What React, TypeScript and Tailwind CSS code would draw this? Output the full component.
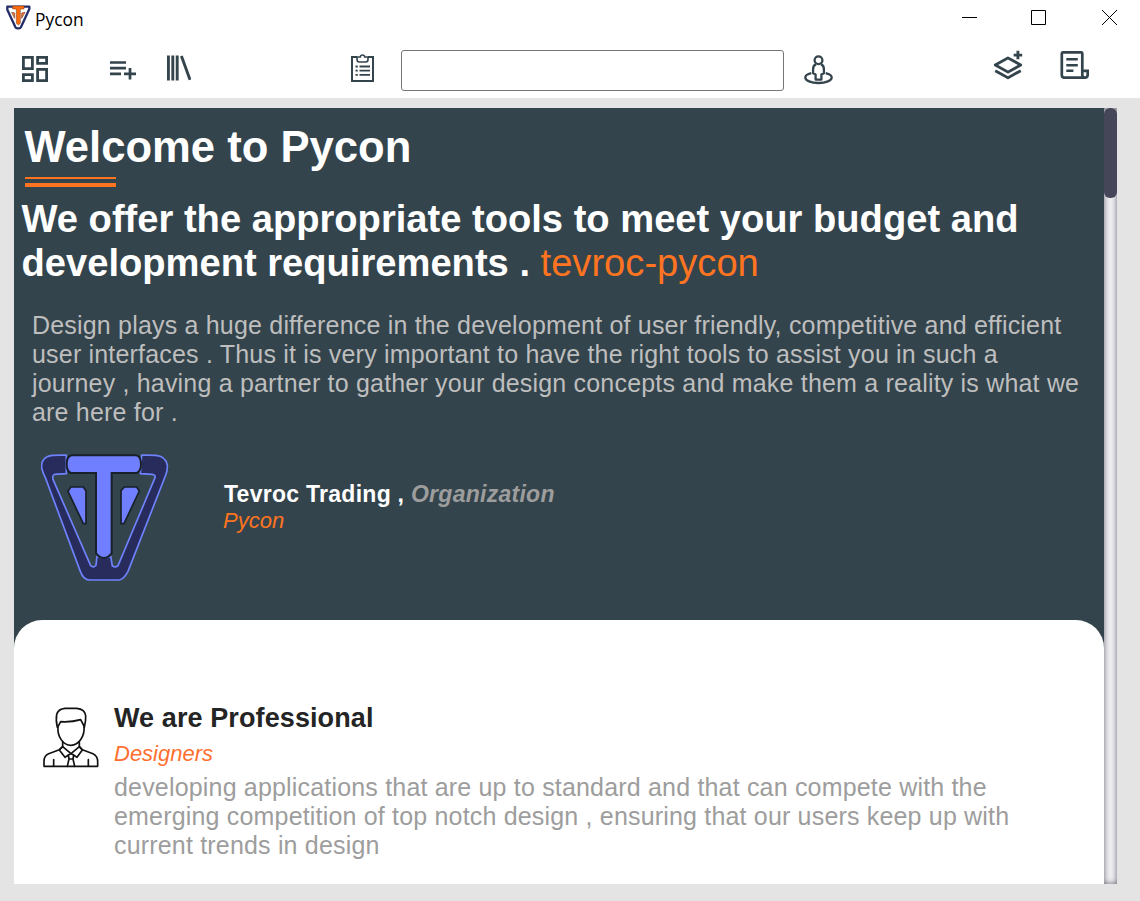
import { BiLayerPlus } from "react-icons/bi";

function SmallLogo() {
  return (
    <svg className="h-[25px] w-[25px]" viewBox="17 14 75 75">
      <path d="M21 19H87V26L62 80Q60 84 56 84H51Q47 84 45 80L21 28Z" fill="#fff" stroke="#262e69" strokeWidth="7" strokeLinejoin="round" />
      <path d="M34 36L43 38V54ZM74 36L64 38V54Z" fill="#f9813a" stroke="#7b3315" strokeWidth="2" />
      <path d="M37 17H71V26H60V69L54 74L48 69V26H37Z" fill="#ff6d0a" stroke="#7b3315" strokeWidth="1.5" />
    </svg>
  );
}

function BigLogo() {
  return (
    <svg className="h-32 w-32" viewBox="63 42 384 384">
      <path
        d="M139 45L98 46C72 48 61 66 66 88Q70 102 76 113L181 394Q190 419 208 420H298Q312 417 324 394L436 108Q443 92 442 76C438 54 425 47 407 46L365 45L361 101L396 103Q407 104 405 113L294 377Q287 384 277 378L272 348Q254 360 231 348L228 376Q221 385 212 377L99 118Q96 106 104 103L139 101Z"
        fill="#272c5c"
        stroke="#6f83ff"
        strokeWidth="5"
        strokeLinejoin="round"
      />
      <path
        d="M154 46H350Q363 50 363 73Q363 94 350 99H275V340Q264 354 252 354Q239 354 228 340V99H153Q140 95 140 73Q140 50 154 46Z"
        fill="#6f7fff"
        stroke="#182029"
        strokeWidth="6"
      />
      <path d="M152 141H190L198 153V251H190L144 154ZM350 141H313L303 152V251H312L358 153Z" fill="#6f7fff" stroke="#182029" strokeWidth="5" strokeLinejoin="round" />
    </svg>
  );
}

function PersonIcon() {
  return (
    <svg className="h-[62px] w-[57px] shrink-0" viewBox="39 34 171 186" fill="none" stroke="#111" strokeWidth="5" strokeLinejoin="round" strokeLinecap="round">
      <path d="M82 95Q77 73 80 57Q84 40 105 38H140Q165 40 167 60Q168 76 163 95" />
      <path d="M84 93L92 78Q124 80 152 72L162 91C165 122 146 149 123 149C99 149 81 122 84 93Z" />
      <path d="M98 138V153L88 162L56 174Q42 180 42 197V212H203V197Q203 181 189 174L157 162L148 153V138" />
      <path d="M98 153L123 174L148 153L157 163L141 185L131 178M98 153L88 163L105 185L115 178M115 178L123 174L131 178L129 190H117ZM117 190L112 212M129 190L134 212M71 192V211M175 192V211" />
    </svg>
  );
}

function DashboardIcon() {
  return (
    <svg className="mt-5 ml-[22px] h-[26px] w-[26px]" viewBox="0 0 26 26" fill="none" stroke="#34444c" strokeWidth="2.8">
      <path d="M1.4 1.4H10.4V12.6H1.4ZM15.6 1.4H24.6V7.3H15.6ZM1.4 18.7H10.4V24.6H1.4ZM15.6 13.4H24.6V24.6H15.6Z" />
    </svg>
  );
}

function ListPlusIcon() {
  return (
    <svg className="mt-[25px] ml-[62px] h-[19px] w-[26px]" viewBox="0 0 26 19" stroke="#34444c" strokeWidth="2.7">
      <path d="M0 1.5H16M0 7.2H16M0 12.8H11M14 12.8H26M20 7V18.5" />
    </svg>
  );
}

function LibraryIcon() {
  return (
    <svg className="mt-[19px] ml-[31px] h-[26px] w-6" viewBox="0 0 24 26" stroke="#34444c" strokeWidth="2.9">
      <path d="M1.4 .5V25.5M5.8 .5V25.5M10.2 .5V25.5M14.4 1L23 24.8" />
    </svg>
  );
}

function ClipboardIcon() {
  return (
    <svg className="mt-[18px] ml-[160px] h-7 w-[23px]" viewBox="0 0 23 28" fill="none" stroke="#34444c" strokeWidth="2">
      <path d="M6 3H1V27H22V3H17" />
      <path d="M6 3H9.3Q9.5 1 11.5 1Q13.5 1 13.7 3H17V5.5Q17 8 14.8 8H8.2Q6 8 6 5.5Z" strokeWidth="1.6" />
      <path d="M4.5 12.5H6.8M8.5 12.5H19M4.5 16.7H6.8M8.5 16.7H19M4.5 20.9H6.8M8.5 20.9H19" strokeWidth="1.8" />
    </svg>
  );
}

function StreetViewIcon() {
  return (
    <svg className="mt-[19px] ml-5 h-[30px] w-[29px]" viewBox="0 0 29 30" fill="none" stroke="#34444c" strokeWidth="2.3" strokeLinejoin="round">
      <circle cx="14.5" cy="5.3" r="3.9" />
      <path d="M12 9.4Q9.1 10.5 9.1 14V18.2L11.6 19.6V24.6H17.4V19.6L19.9 18.2V14Q19.9 10.5 17 9.4" />
      <path d="M7.3 18.1C3.3 19 1.3 20.6 1.3 22.4C1.3 25.6 7 28 14.5 28S27.7 25.6 27.7 22.4C27.7 20.6 25.7 19 21.7 18.1" />
    </svg>
  );
}

function ReceiptIcon() {
  return (
    <svg className="mt-[15px] ml-[35px] h-7 w-[29px]" viewBox="0 0 29 28" fill="none" stroke="#34444c" strokeWidth="2.7">
      <path d="M22.3 20V2.6Q22.3 1.3 21 1.3H3.3Q1.8 1.3 1.8 2.8V24Q1.8 26.7 4.5 26.7H25Q27.7 26.7 27.7 24V19.9H22.3V24Q22.3 26.7 25 26.7" />
      <path d="M6.3 8.3H17.8M6.3 14.2H17.8M6.3 19.8H13.4" strokeWidth="2.5" />
    </svg>
  );
}

function TitleBar() {
  return (
    <div className="flex h-9 items-start">
      <div className="mt-[4.5px] ml-[5.5px]"><SmallLogo /></div>
      <span className="mt-[7px] ml-[4.5px] font-['Open_Sans',sans-serif] text-[17.4px] leading-6 text-black">Pycon</span>
      <svg className="mt-[10px] mr-[23px] ml-auto h-4 w-[155px]" viewBox="0 0 155 16" fill="none" stroke="#000">
        <path d="M0 7.5H15M69.5 .5H83.5V14.5H69.5Z" />
        <path d="M140 0L155 15M155 0L140 15" />
      </svg>
    </div>
  );
}

function Toolbar() {
  return (
    <div className="flex h-[62px] items-start text-[#34444c]">
      <DashboardIcon />
      <ListPlusIcon />
      <LibraryIcon />
      <ClipboardIcon />
      <input className="mt-[14px] ml-[27px] h-[41px] w-[383px] rounded-[3px] border border-[#767676] bg-white px-2 outline-none" />
      <StreetViewIcon />
      <BiLayerPlus className="mt-3 ml-[158px] h-[34px] w-[34px]" />
      <ReceiptIcon />
    </div>
  );
}

export default function App() {
  return (
    <div className="flex h-[901px] w-[1140px] flex-col overflow-hidden bg-[#e4e4e4] font-['Liberation_Sans',Arial,sans-serif]">
      <header className="h-[98px] bg-white">
        <TitleBar />
        <Toolbar />
      </header>
      <div className="mt-[10px] ml-[14px] flex h-[776px] w-[1103px]">
        <main className="flex w-[1090px] flex-col overflow-hidden bg-[#34444c]">
          <section className="h-[512px] pt-[14px]">
            <h1 className="ml-[10.5px] text-[43.6px] leading-[50px] font-bold whitespace-nowrap text-white">Welcome to Pycon</h1>
            <div className="mt-[5px] ml-[11px] h-[10px] w-[91px] border-t-2 border-b-4 border-[#ff7420]" />
            <h2 className="mt-[10px] ml-[7.5px] text-[38.13px] leading-[44px] font-bold whitespace-nowrap text-white">
              We offer the appropriate tools to meet your budget and
              <br />
              development requirements . <span className="font-normal text-[#ff7420]">tevroc-pycon</span>
            </h2>
            <p className="mt-[26px] ml-[18px] text-[25px] leading-[29px] tracking-[0.19px] whitespace-nowrap text-[#bebebe]">
              Design plays a huge difference in the development of user friendly, competitive and efficient
              <br />
              user interfaces . Thus it is very important to have the right tools to assist you in such a
              <br />
              journey , having a partner to gather your design concepts and make them a reality is what we
              <br />
              are here for .
            </p>
            <div className="mt-[27px] ml-[27px] flex items-start">
              <BigLogo />
              <div className="mt-[27px] ml-[55px] leading-[26px]">
                <p className="text-[23px] font-bold tracking-[0.27px] text-white">
                  Tevroc Trading , <em className="text-[#9d9d9d]">Organization</em>
                </p>
                <p className="mt-px -ml-px text-[22px] text-[#ff7420] italic">Pycon</p>
              </div>
            </div>
          </section>
          <section className="flex h-[264px] items-start rounded-t-[28px] bg-white pt-[82px] pl-[29px]">
            <div className="mt-[5px]"><PersonIcon /></div>
            <div className="ml-[14px]">
              <h3 className="text-[27px] leading-8 font-bold tracking-[0.1px] text-[#242424]">We are Professional</h3>
              <p className="mt-[7px] text-[22px] leading-[26px] text-[#ff7030] italic">Designers</p>
              <p className="mt-[6px] text-[25px] leading-[29px] tracking-[0.18px] whitespace-nowrap text-[#9d9d9d]">
                developing applications that are up to standard and that can compete with the
                <br />
                emerging competition of top notch design , ensuring that our users keep up with
                <br />
                current trends in design
              </p>
            </div>
          </section>
        </main>
        <div className="w-[13px] bg-[#f2f2f4] shadow-[inset_0_0_6px_#606070]">
          <div className="h-[90px] w-full rounded-[6px] bg-[#464659]" />
        </div>
      </div>
    </div>
  );
}
